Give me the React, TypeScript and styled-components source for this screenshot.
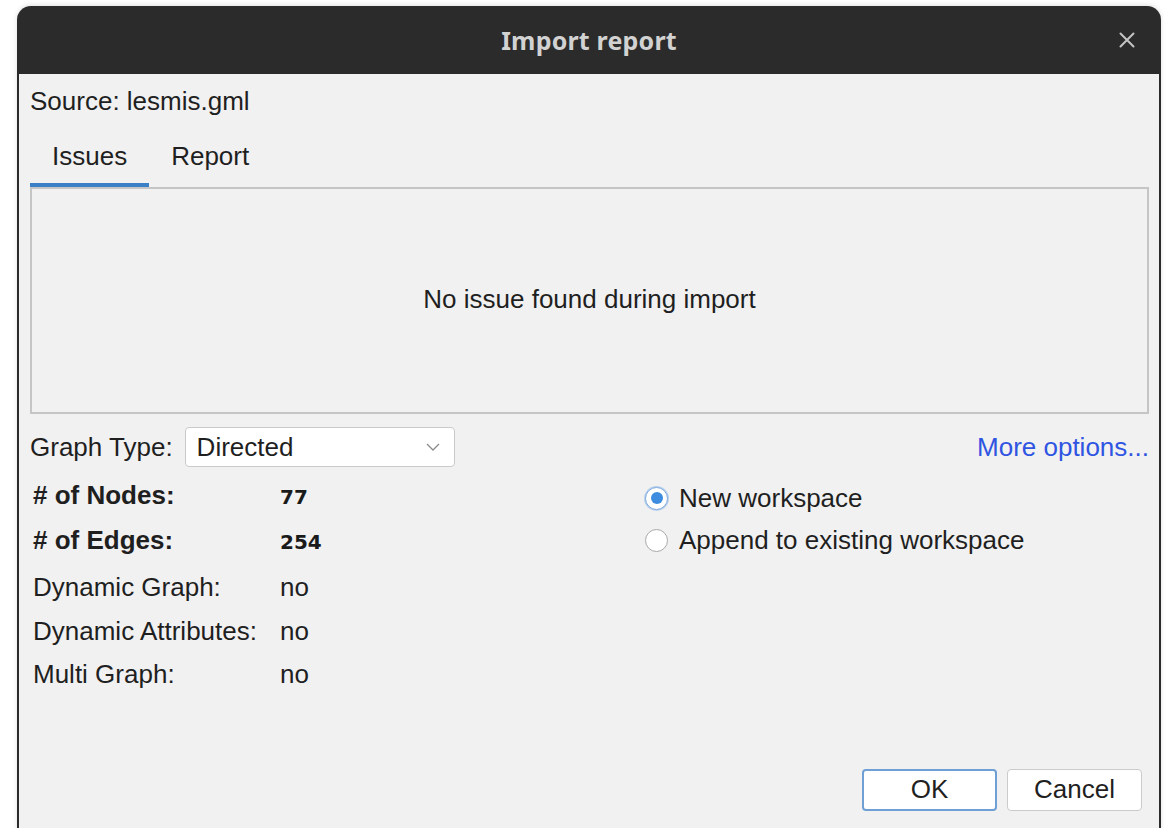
import React from 'react';
import styled, { createGlobalStyle } from 'styled-components';

const GlobalStyle = createGlobalStyle`
  html, body {
    margin: 0;
    padding: 0;
    background: #ffffff;
  }
  body {
    font-family: "Liberation Sans", Arial, sans-serif;
  }
`;

const Page = styled.div`
  height: 828px;
  overflow: hidden;
  padding: 6px 0 0 17px;
  box-sizing: border-box;
`;

const Window = styled.div`
  width: 1144px;
  height: 840px;
  box-sizing: border-box;
  padding: 0 2px;
  background: #2b2b2b;
  border-radius: 14px 14px 0 0;
  box-shadow: 0 -1px 5px rgba(0, 0, 0, 0.12);
  display: flex;
  flex-direction: column;
`;

const TitleBar = styled.div`
  height: 68px;
  flex: none;
  display: grid;
  grid-template-columns: 1fr auto 1fr;
  align-items: center;
`;

const Title = styled.div`
  grid-column: 2;
  font-family: "Noto Sans", "DejaVu Sans", sans-serif;
  font-weight: 700;
  font-size: 25px;
  color: #d2d2d2;
  letter-spacing: 0.2px;
`;

const CloseButton = styled.button`
  grid-column: 3;
  justify-self: end;
  margin-right: 22px;
  width: 20px;
  height: 20px;
  padding: 0;
  border: 0;
  background: transparent;
  display: flex;
  align-items: center;
  justify-content: center;
`;

const Body = styled.div`
  flex: 1;
  background: #f1f1f1;
  padding: 12px 10px 0 11px;
  display: flex;
  flex-direction: column;
  color: #1f1f1f;
  font-size: 26px;
`;

const SourceLine = styled.div`
  line-height: 30px;
`;

const TabBar = styled.div`
  display: flex;
  margin-top: 25px;
`;

const Tab = styled.div<{ $active?: boolean }>`
  padding: 0 22px 12px;
  line-height: 30px;
  border-bottom: 4px solid ${({ $active }) => ($active ? '#3b7fc6' : 'transparent')};
`;

const Panel = styled.div`
  height: 227px;
  box-sizing: border-box;
  border: 2px solid #c5c5c5;
  display: flex;
  align-items: center;
  justify-content: center;
  padding-bottom: 2px;
`;

const OptionsRow = styled.div`
  margin-top: 13px;
  height: 40px;
  display: flex;
  align-items: center;
`;

const Select = styled.div`
  margin-left: 12px;
  width: 270px;
  height: 40px;
  box-sizing: border-box;
  padding: 0 14px 0 11px;
  background: #ffffff;
  border: 1px solid #cacaca;
  border-radius: 4px;
  display: flex;
  align-items: center;
  justify-content: space-between;
`;

const MoreLink = styled.a`
  margin-left: auto;
  color: #2f55e2;
  text-decoration: none;
`;

const Details = styled.div`
  margin-top: 7px;
  display: grid;
  grid-template-columns: 613px 1fr;
`;

const Stats = styled.div`
  padding-left: 3px;
`;

const StatRow = styled.div<{ $line: number; $gap?: number }>`
  display: grid;
  grid-template-columns: 247px auto;
  align-items: baseline;
  line-height: ${({ $line }) => $line}px;
  margin-top: ${({ $gap = 0 }) => $gap}px;
`;

const StatLabel = styled.span<{ $bold?: boolean }>`
  font-weight: ${({ $bold }) => ($bold ? 700 : 400)};
`;

const Count = styled.span`
  font-family: "DejaVu Sans", sans-serif;
  font-weight: 700;
  font-size: 20px;
  color: #1a1a1a;
`;

const RadioGroup = styled.div`
  padding-top: 3px;
  display: flex;
  flex-direction: column;
`;

const RadioRow = styled.label`
  height: 42px;
  display: flex;
  align-items: center;
  gap: 11px;
`;

const RadioDot = styled.span<{ $checked?: boolean }>`
  margin-left: 2px;
  width: 23px;
  height: 23px;
  box-sizing: border-box;
  border-radius: 50%;
  background: #ffffff;
  border: 1px solid ${({ $checked }) => ($checked ? '#7fa9dc' : '#a9a9a9')};
  box-shadow: ${({ $checked }) => ($checked ? '0 0 0 1px #b9d1ee' : 'none')};
  display: flex;
  align-items: center;
  justify-content: center;

  &::after {
    content: '';
    width: 12px;
    height: 12px;
    border-radius: 50%;
    background: ${({ $checked }) => ($checked ? '#3d8ce0' : 'transparent')};
  }
`;

const ButtonRow = styled.div`
  margin-top: 72px;
  padding-right: 7px;
  display: flex;
  justify-content: flex-end;
  gap: 10px;
`;

const Button = styled.button<{ $primary?: boolean }>`
  width: 135px;
  height: 42px;
  box-sizing: border-box;
  font-family: "Liberation Sans", Arial, sans-serif;
  font-size: 26px;
  color: #1f1f1f;
  background: #ffffff;
  border-radius: 4px;
  border: ${({ $primary }) => ($primary ? '2px solid #6f9fd4' : '1px solid #cbcbcb')};
  padding: 0;
`;

const Chevron = () => (
  <svg width="14" height="8" viewBox="0 0 14 8">
    <polyline points="1,1 7,7 13,1" fill="none" stroke="#8c8c8c" strokeWidth="1.3" />
  </svg>
);

const CloseIcon = () => (
  <svg width="16" height="16" viewBox="0 0 16 16">
    <path d="M1.5 1.5 L14.5 14.5 M14.5 1.5 L1.5 14.5" stroke="#c4c4c4" strokeWidth="2" strokeLinecap="round" />
  </svg>
);

export default function App() {
  return (
    <>
      <GlobalStyle />
      <Page>
        <Window>
          <TitleBar>
            <Title>Import report</Title>
            <CloseButton aria-label="Close">
              <CloseIcon />
            </CloseButton>
          </TitleBar>
          <Body>
            <SourceLine>Source: lesmis.gml</SourceLine>
            <TabBar>
              <Tab $active>Issues</Tab>
              <Tab>Report</Tab>
            </TabBar>
            <Panel>No issue found during import</Panel>
            <OptionsRow>
              <span>Graph Type:</span>
              <Select>
                <span>Directed</span>
                <Chevron />
              </Select>
              <MoreLink href="#">More options...</MoreLink>
            </OptionsRow>
            <Details>
              <Stats>
                <StatRow $line={43}>
                  <StatLabel $bold># of Nodes:</StatLabel>
                  <Count>77</Count>
                </StatRow>
                <StatRow $line={43}>
                  <StatLabel $bold># of Edges:</StatLabel>
                  <Count>254</Count>
                </StatRow>
                <StatRow $line={43.5} $gap={2}>
                  <StatLabel>Dynamic Graph:</StatLabel>
                  <span>no</span>
                </StatRow>
                <StatRow $line={43.5}>
                  <StatLabel>Dynamic Attributes:</StatLabel>
                  <span>no</span>
                </StatRow>
                <StatRow $line={43.5}>
                  <StatLabel>Multi Graph:</StatLabel>
                  <span>no</span>
                </StatRow>
              </Stats>
              <RadioGroup>
                <RadioRow>
                  <RadioDot $checked />
                  New workspace
                </RadioRow>
                <RadioRow>
                  <RadioDot />
                  Append to existing workspace
                </RadioRow>
              </RadioGroup>
            </Details>
            <ButtonRow>
              <Button $primary>OK</Button>
              <Button>Cancel</Button>
            </ButtonRow>
          </Body>
        </Window>
      </Page>
    </>
  );
}
